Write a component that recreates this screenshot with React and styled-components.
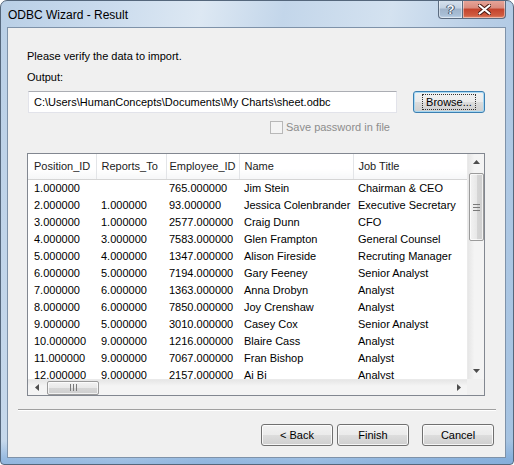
import styled, { createGlobalStyle } from "styled-components";

const GlobalStyle = createGlobalStyle`
  html, body {
    margin: 0;
    padding: 0;
    background: #ffffff;
  }
  body {
    width: 514px;
    height: 465px;
    overflow: hidden;
    font-family: "Liberation Sans", Tahoma, Arial, sans-serif;
    font-size: 11px;
    color: #000;
  }
`;

const Window = styled.div`
  width: 514px;
  height: 465px;
  box-sizing: border-box;
  display: flex;
  flex-direction: column;
  padding: 0 7px 6px 6px;
  border: 1px solid #55677c;
  border-radius: 7px 7px 4px 4px;
  background: linear-gradient(
      to bottom,
      rgba(255, 255, 255, 0) 0,
      rgba(255, 255, 255, 0) 440px,
      rgba(110, 160, 215, 0.55) 458px,
      rgba(120, 165, 215, 0.7) 465px
    ),
    linear-gradient(
      100deg,
      #b9cfe6 0%,
      #cadbed 18%,
      #dde8f3 34%,
      #c3d6ea 48%,
      #d4e2f0 66%,
      #b8cee6 82%,
      #a4c2e1 100%
    );
  overflow: hidden;
`;

const TitleBar = styled.div`
  height: 26px;
  display: flex;
  justify-content: space-between;
  align-items: flex-start;
`;

const Title = styled.div`
  font-size: 12px;
  line-height: 14px;
  padding: 7px 0 0 1px;
  color: #000;
`;

const CaptionButtons = styled.div`
  display: flex;
  margin-top: -1px;
`;

const CaptionButton = styled.div`
  width: ${(p) => p.$w}px;
  height: 19px;
  box-sizing: border-box;
  display: flex;
  align-items: center;
  justify-content: center;
  border: 1px solid #5b6b7f;
  border-top: none;
  border-radius: ${(p) => (p.$close ? "0 0 4px 0" : "0 0 0 4px")};
  border-left: ${(p) => (p.$close ? "none" : "1px solid #5b6b7f")};
  background: ${(p) =>
    p.$close
      ? "linear-gradient(to bottom, #e8a89c 0%, #d98a7c 45%, #c4432c 50%, #cf5b3f 85%, #e2866a 100%)"
      : "linear-gradient(to bottom, #d7e2ee 0%, #c2d1e2 45%, #9fb3ca 50%, #a9bfd6 85%, #c5d7ea 100%)"};
  box-shadow: inset 0 0 0 1px rgba(255, 255, 255, 0.45);
`;

const HelpGlyph = styled.span`
  font-family: "Liberation Sans", Arial, sans-serif;
  font-weight: bold;
  font-size: 13px;
  line-height: 13px;
  color: #f4f7fb;
  text-shadow: 0 0 1px #3d4f66, 0 0 1px #3d4f66, 1px 0 0 #3d4f66,
    -1px 0 0 #3d4f66;
`;

const Client = styled.div`
  flex: 1;
  display: flex;
  flex-direction: column;
  background: #f0f0f0;
  border: 1px solid #7e92a9;
`;

const Content = styled.div`
  padding: 0 19px;
  display: flex;
  flex-direction: column;
`;

const Label = styled.div`
  line-height: 14px;
  margin-top: ${(p) => p.$top}px;
`;

const InputRow = styled.div`
  display: flex;
  align-items: center;
  margin-top: 7px;
  gap: 16px;
`;

const PathField = styled.div`
  width: 369px;
  height: 22px;
  margin-left: 1px;
  box-sizing: border-box;
  display: flex;
  align-items: center;
  padding-left: 5px;
  background: #fff;
  border: 1px solid #e2e3ea;
  border-top-color: #abadb3;
  white-space: nowrap;
`;

const Button = styled.div`
  width: ${(p) => p.$w || 72}px;
  height: 22px;
  box-sizing: border-box;
  display: flex;
  align-items: center;
  justify-content: center;
  border: 1px solid ${(p) => (p.$focus ? "#3c7fb1" : "#707070")};
  border-radius: 3px;
  background: linear-gradient(
    to bottom,
    #f2f2f2 0%,
    #ebebeb 49%,
    #dddddd 50%,
    #cfcfcf 100%
  );
  box-shadow: inset 0 0 0 1px
    ${(p) => (p.$focus ? "rgba(160, 215, 245, 0.9)" : "rgba(255,255,255,0.8)")};
  color: #000;
`;

const FocusText = styled.span`
  padding: 0 2px;
  outline: 1px dotted #333;
  outline-offset: 1px;
  line-height: 12px;
`;

const CheckRow = styled.div`
  display: flex;
  align-items: center;
  gap: 3px;
  margin: 7px 0 0 243px;
  height: 14px;
  color: #8d8d8d;
`;

const CheckBox = styled.div`
  width: 13px;
  height: 13px;
  box-sizing: border-box;
  border: 1px solid #b8b8b8;
  background: #f4f4f4;
`;

const ListBox = styled.div`
  margin-top: 19px;
  width: 458px;
  height: 243px;
  box-sizing: border-box;
  border: 1px solid #828790;
  background: #fff;
  display: grid;
  grid-template-columns: 1fr 17px;
  grid-template-rows: 1fr 16px;
`;

const Viewport = styled.div`
  overflow: hidden;
`;

const Table = styled.table`
  border-collapse: collapse;
  table-layout: fixed;
  width: 475px;
  font-size: 11px;
`;

const HeadCell = styled.th`
  width: ${(p) => p.$w}px;
  height: 25px;
  padding: 0 0 0 ${(p) => p.$pad}px;
  text-align: left;
  font-weight: normal;
  color: #1c1c1c;
  white-space: nowrap;
  background: linear-gradient(to bottom, #ffffff 0%, #ffffff 60%, #f6f7f8 100%);
  border-right: 1px solid #e3e5e8;
  border-bottom: 1px solid #d5d5d5;
  box-sizing: border-box;
`;

const Cell = styled.td`
  height: 17px;
  padding: 0 0 0 ${(p) => p.$pad}px;
  white-space: nowrap;
  overflow: hidden;
  line-height: 17px;
`;

const VScroll = styled.div`
  display: flex;
  flex-direction: column;
  align-items: center;
  background: linear-gradient(to right, #e6e6e6, #f4f4f4 40%, #f4f4f4);
  border-left: 1px solid #eaeaea;
`;

const HScroll = styled.div`
  display: flex;
  align-items: center;
  background: linear-gradient(to bottom, #e6e6e6, #f4f4f4 40%, #f4f4f4);
  border-top: 1px solid #eaeaea;
`;

const ArrowSlot = styled.div`
  width: 17px;
  height: 16px;
  flex: none;
  display: flex;
  align-items: center;
  justify-content: center;
`;

const Spacer = styled.div`
  flex: 1;
`;

const Thumb = styled.div`
  box-sizing: border-box;
  flex: none;
  display: flex;
  align-items: center;
  justify-content: center;
  border: 1px solid #9b9b9b;
  border-radius: 2px;
  width: ${(p) => (p.$horizontal ? "52px" : "15px")};
  height: ${(p) => (p.$horizontal ? "14px" : "68px")};
  margin: ${(p) => (p.$horizontal ? "0 0 0 2px" : "3px 0 0 0")};
  background: ${(p) =>
    p.$horizontal
      ? "linear-gradient(to bottom, #f3f3f3, #e8e8e8 50%, #d6d6d6 51%, #cfcfcf)"
      : "linear-gradient(to right, #f3f3f3, #e8e8e8 50%, #d6d6d6 51%, #cfcfcf)"};
  box-shadow: inset 0 0 0 1px rgba(255, 255, 255, 0.7);
`;

const Corner = styled.div`
  background: #f0f0f0;
`;

const Footer = styled.div`
  display: flex;
  flex-direction: column;
  margin-top: 13px;
`;

const Separator = styled.div`
  height: 1px;
  margin: 0 9px 0 10px;
  background: #a0a0a0;
  border-bottom: 1px solid #ffffff;
`;

const ButtonRow = styled.div`
  display: flex;
  justify-content: flex-end;
  margin: 13px 11px 0 0;
`;

const ButtonGap = styled.div`
  width: ${(p) => p.$w}px;
`;

const Arrow = ({ dir }) => {
  const pts = {
    up: "0,4 3.5,0 7,4",
    down: "0,0 3.5,4 7,0",
    left: "4,0 0,3.5 4,7",
    right: "0,0 4,3.5 0,7",
  }[dir];
  const vertical = dir === "up" || dir === "down";
  return (
    <svg width={vertical ? 7 : 4} height={vertical ? 4 : 7}>
      <polygon points={pts} fill="#4d4d4d" />
    </svg>
  );
};

const Grip = ({ horizontal }) =>
  horizontal ? (
    <svg width="7" height="7">
      <path d="M0.5 0v7M3.5 0v7M6.5 0v7" stroke="#7a7a7a" strokeWidth="1" />
    </svg>
  ) : (
    <svg width="7" height="7">
      <path d="M0 0.5h7M0 3.5h7M0 6.5h7" stroke="#7a7a7a" strokeWidth="1" />
    </svg>
  );

const CloseIcon = () => (
  <svg width="13" height="11" viewBox="0 0 13 11">
    <path
      d="M1 1L12 10M12 1L1 10"
      stroke="#4a1a12"
      strokeWidth="4"
      strokeLinecap="round"
    />
    <path
      d="M1.5 1.5L11.5 9.5M11.5 1.5L1.5 9.5"
      stroke="#ffffff"
      strokeWidth="2.2"
      strokeLinecap="round"
    />
  </svg>
);

const columns = [
  { title: "Position_ID", w: 68, pad: 6 },
  { title: "Reports_To", w: 70, pad: 5 },
  { title: "Employee_ID", w: 73, pad: 3 },
  { title: "Name", w: 114, pad: 5 },
  { title: "Job Title", w: 150, pad: 5 },
];

const rows = [
  ["1.000000", "", "765.000000", "Jim Stein", "Chairman & CEO"],
  ["2.000000", "1.000000", "93.000000", "Jessica Colenbrander", "Executive Secretary"],
  ["3.000000", "1.000000", "2577.000000", "Craig Dunn", "CFO"],
  ["4.000000", "3.000000", "7583.000000", "Glen Frampton", "General Counsel"],
  ["5.000000", "4.000000", "1347.000000", "Alison Fireside", "Recruting Manager"],
  ["6.000000", "5.000000", "7194.000000", "Gary Feeney", "Senior Analyst"],
  ["7.000000", "6.000000", "1363.000000", "Anna Drobyn", "Analyst"],
  ["8.000000", "6.000000", "7850.000000", "Joy Crenshaw", "Analyst"],
  ["9.000000", "5.000000", "3010.000000", "Casey Cox", "Senior Analyst"],
  ["10.000000", "9.000000", "1216.000000", "Blaire Cass", "Analyst"],
  ["11.000000", "9.000000", "7067.000000", "Fran Bishop", "Analyst"],
  ["12.000000", "9.000000", "2157.000000", "Ai Bi", "Analyst"],
];

const App = () => {
  return (
    <>
      <GlobalStyle />
      <Window>
        <TitleBar>
          <Title>ODBC Wizard - Result</Title>
          <CaptionButtons>
            <CaptionButton $w={25}>
              <HelpGlyph>?</HelpGlyph>
            </CaptionButton>
            <CaptionButton $w={43} $close>
              <CloseIcon />
            </CaptionButton>
          </CaptionButtons>
        </TitleBar>
        <Client>
          <Content>
            <Label $top={21}>Please verify the data to import.</Label>
            <Label $top={7}>Output:</Label>
            <InputRow>
              <PathField>C:\Users\HumanConcepts\Documents\My Charts\sheet.odbc</PathField>
              <Button $focus>
                <FocusText>Browse...</FocusText>
              </Button>
            </InputRow>
            <CheckRow>
              <CheckBox />
              <span>Save password in file</span>
            </CheckRow>
            <ListBox>
              <Viewport>
                <Table>
                  <thead>
                    <tr>
                      {columns.map((c) => (
                        <HeadCell key={c.title} $w={c.w} $pad={c.pad}>
                          {c.title}
                        </HeadCell>
                      ))}
                    </tr>
                  </thead>
                  <tbody>
                    {rows.map((r, i) => (
                      <tr key={i}>
                        {r.map((v, j) => (
                          <Cell key={j} $pad={columns[j].pad}>
                            {v}
                          </Cell>
                        ))}
                      </tr>
                    ))}
                  </tbody>
                </Table>
              </Viewport>
              <VScroll>
                <ArrowSlot>
                  <Arrow dir="up" />
                </ArrowSlot>
                <Thumb>
                  <Grip />
                </Thumb>
                <Spacer />
                <ArrowSlot>
                  <Arrow dir="down" />
                </ArrowSlot>
              </VScroll>
              <HScroll>
                <ArrowSlot>
                  <Arrow dir="left" />
                </ArrowSlot>
                <Thumb $horizontal>
                  <Grip horizontal />
                </Thumb>
                <Spacer />
                <ArrowSlot>
                  <Arrow dir="right" />
                </ArrowSlot>
              </HScroll>
              <Corner />
            </ListBox>
          </Content>
          <Footer>
            <Separator />
            <ButtonRow>
              <Button $w={72}>&lt; Back</Button>
              <ButtonGap $w={4} />
              <Button $w={72}>Finish</Button>
              <ButtonGap $w={13} />
              <Button $w={72}>Cancel</Button>
            </ButtonRow>
          </Footer>
        </Client>
      </Window>
    </>
  );
};

export default App;
